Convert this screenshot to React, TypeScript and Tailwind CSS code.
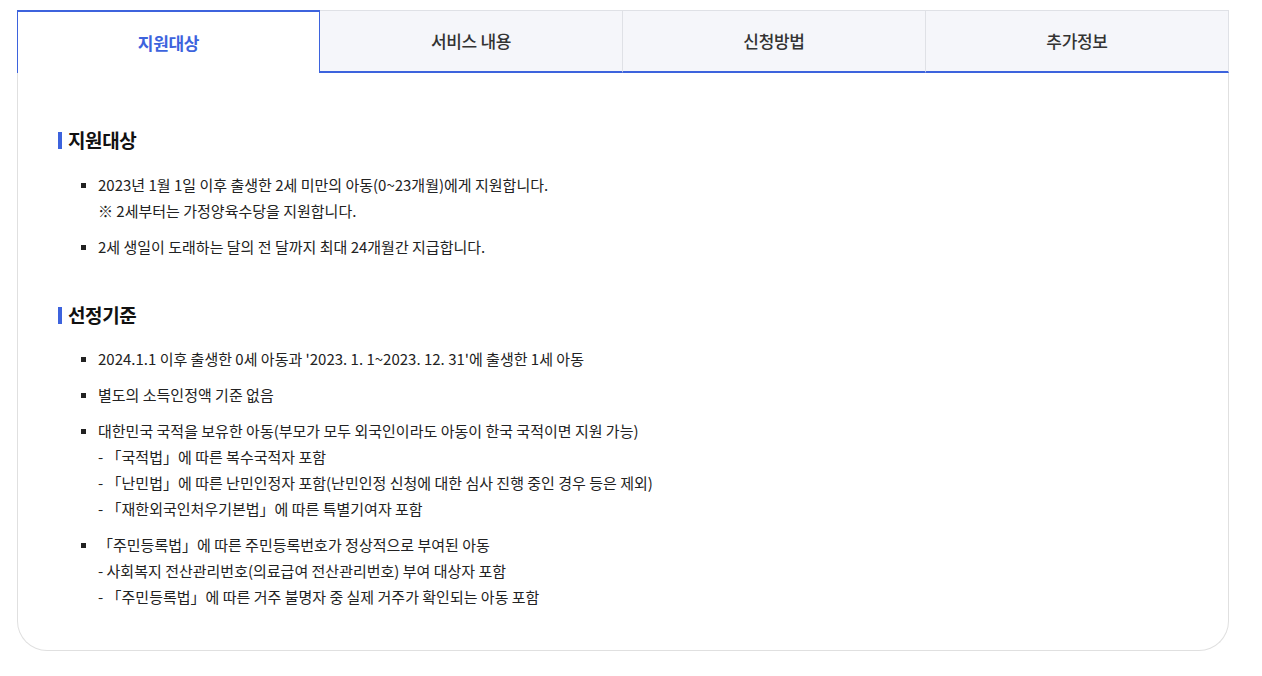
import React from "react";

const tabs = ["지원대상", "서비스 내용", "신청방법", "추가정보"];

type Item = { text: string; subs?: string[] };

const targetItems: Item[] = [
  {
    text: "2023년 1월 1일 이후 출생한 2세 미만의 아동(0~23개월)에게 지원합니다.",
    subs: ["※ 2세부터는 가정양육수당을 지원합니다."],
  },
  { text: "2세 생일이 도래하는 달의 전 달까지 최대 24개월간 지급합니다." },
];

const criteriaItems: Item[] = [
  { text: "2024.1.1 이후 출생한 0세 아동과 '2023. 1. 1~2023. 12. 31'에 출생한 1세 아동" },
  { text: "별도의 소득인정액 기준 없음" },
  {
    text: "대한민국 국적을 보유한 아동(부모가 모두 외국인이라도 아동이 한국 국적이면 지원 가능)",
    subs: [
      "- 「국적법」에 따른 복수국적자 포함",
      "- 「난민법」에 따른 난민인정자 포함(난민인정 신청에 대한 심사 진행 중인 경우 등은 제외)",
      "- 「재한외국인처우기본법」에 따른 특별기여자 포함",
    ],
  },
  {
    text: "「주민등록법」에 따른 주민등록번호가 정상적으로 부여된 아동",
    subs: [
      "- 사회복지 전산관리번호(의료급여 전산관리번호) 부여 대상자 포함",
      "- 「주민등록법」에 따른 거주 불명자 중 실제 거주가 확인되는 아동 포함",
    ],
  },
];

const Heading = ({ title }: { title: string }) => (
  <h3 className="flex items-center gap-[6px] text-[19px] font-bold text-[#111] leading-[26px] tracking-[-0.4px]">
    <span className="w-[4px] h-[17px] bg-[#3d63dd]" />
    {title}
  </h3>
);

const List = ({ items }: { items: Item[] }) => (
  <ul className="flex flex-col gap-[10px] pl-[23px]">
    {items.map((it) => (
      <li key={it.text} className="flex text-[15px] leading-[26px] text-[#222] tracking-[0px]">
        <span className="w-[5px] h-[5px] bg-[#222] mt-[11px] mr-[12px] shrink-0" />
        <div>
          <p>{it.text}</p>
          {it.subs?.map((s) => (
            <p key={s}>{s}</p>
          ))}
        </div>
      </li>
    ))}
  </ul>
);

export default function App() {
  return (
    <div
      className="bg-white min-h-[676px] pt-[10px] pl-[17px] pr-[33px]"
      style={{ fontFamily: '"Noto Sans CJK KR", "Noto Sans", sans-serif' }}
    >
      <div className="w-[1212px] border-x border-b border-[#e0e0e0] rounded-b-[30px]">
        <div className="grid grid-cols-4 -mx-px">
          {tabs.map((t, i) =>
            i === 0 ? (
              <div
                key={t}
                className="h-[63px] flex items-center justify-center bg-white border-t-2 border-x border-[#3d63dd] text-[17px] font-bold text-[#3d63dd] tracking-[-0.3px]"
              >
                {t}
              </div>
            ) : (
              <div
                key={t}
                className="h-[63px] flex items-center justify-center bg-[#f5f6fa] border-t border-r border-[#dfe1e6] border-b-2 border-b-[#3d63dd] text-[17px] font-medium text-[#333] tracking-[-0.3px]"
              >
                {t}
              </div>
            )
          )}
        </div>
        <div className="pt-[54px] pl-[40px] pb-[40px]">
          <Heading title="지원대상" />
          <div className="mt-[19px]">
            <List items={targetItems} />
          </div>
          <div className="mt-[42px]">
            <Heading title="선정기준" />
          </div>
          <div className="mt-[18px]">
            <List items={criteriaItems} />
          </div>
        </div>
      </div>
    </div>
  );
}
